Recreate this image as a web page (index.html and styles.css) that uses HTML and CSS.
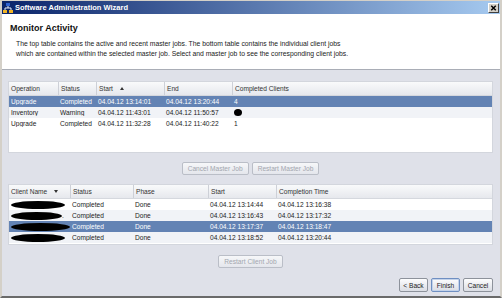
FILE: index.html
```html
<!DOCTYPE html>
<html lang="en">
<head>
  <meta charset="UTF-8" />
  <title>Software Administration Wizard</title>
  <link rel="stylesheet" href="styles.css">
</head>
<body>
  <div class="window">
    <div class="titlebar">
      <svg class="app-icon" viewBox="0 0 10 10">
        <path d="M5 3v2M2 5h6M2 5v2M8 5v2" stroke="#e8eef8" stroke-width="1" fill="none"/>
        <rect x="3" y="0" width="4" height="3" fill="#2f62d0"/>
        <rect x="0" y="7" width="4" height="3" fill="#f2b524"/>
        <rect x="6" y="7" width="4" height="3" fill="#f2b524"/>
      </svg>
      <span class="title">Software Administration Wizard</span>
      <div class="close-btn"><svg viewBox="0 0 8 7"><path d="M2 1.5l4 4M6 1.5l-4 4" stroke="#000" stroke-width="1.3"/></svg></div>
    </div>
    <div class="header">
      <h1>Monitor Activity</h1>
      <p>The top table contains the active and recent master jobs. The bottom table contains the individual client jobs<br>which are contained within the selected master job. Select and master job to see the corresponding client jobs.</p>
    </div>
    <div class="content">
      <div class="table master">
        <div class="row head"><span>Operation</span><span>Status</span><span>Start<i class="sort up"></i></span><span>End</span><span>Completed Clients</span></div>
        <div class="row selected"><span>Upgrade</span><span>Completed</span><span>04.04.12 13:14:01</span><span>04.04.12 13:20:44</span><span>4</span></div>
        <div class="row alt"><span>Inventory</span><span>Warning</span><span>04.04.12 11:43:01</span><span>04.04.12 11:50:57</span><span><b class="redact dot"></b></span></div>
        <div class="row"><span>Upgrade</span><span>Completed</span><span>04.04.12 11:32:28</span><span>04.04.12 11:40:22</span><span>1</span></div>
      </div>
      <div class="actions">
        <button class="btn" disabled>Cancel Master Job</button>
        <button class="btn" disabled>Restart Master Job</button>
      </div>
      <div class="table client">
        <div class="row head"><span>Client Name<i class="sort down"></i></span><span>Status</span><span>Phase</span><span>Start</span><span>Completion Time</span></div>
        <div class="row"><span><b class="redact" style="width:54px"></b></span><span>Completed</span><span>Done</span><span>04.04.12 13:14:44</span><span>04.04.12 13:16:38</span></div>
        <div class="row alt"><span><b class="redact" style="width:51px"></b>.</span><span>Completed</span><span>Done</span><span>04.04.12 13:16:43</span><span>04.04.12 13:17:32</span></div>
        <div class="row selected"><span><b class="redact" style="width:60px"></b></span><span>Completed</span><span>Done</span><span>04.04.12 13:17:37</span><span>04.04.12 13:18:47</span></div>
        <div class="row alt"><span><b class="redact" style="width:54px"></b></span><span>Completed</span><span>Done</span><span>04.04.12 13:18:52</span><span>04.04.12 13:20:44</span></div>
      </div>
      <div class="actions lower">
        <button class="btn" disabled>Restart Client Job</button>
      </div>
      <div class="nav">
        <button class="btn">&lt; Back</button>
        <button class="btn default">Finish</button>
        <button class="btn">Cancel</button>
      </div>
    </div>
  </div>
</body>
</html>
```

FILE: styles.css
```css
body { margin: 0; background: #d4d0c8; font-family: "Liberation Sans", Arial, sans-serif; }
.window { width: 502px; height: 298px; box-sizing: border-box; display: flex; flex-direction: column; background: #dfe1e9; border: solid #d4d0c8; border-width: 1px 2px 2px; border-bottom-color: #6a6a6a; }

.titlebar { height: 13px; flex: none; display: flex; align-items: center; padding: 0 1px 0 1px; background: linear-gradient(to right, #0a246a, #a6caf0); }
.app-icon { width: 10px; height: 10px; margin-right: 2px; }
.title { flex: 1; color: #fff; font-weight: bold; font-size: 7.5px; white-space: nowrap; }
.close-btn { width: 9px; height: 8px; background: #d4d0c8; border: 1px solid; border-color: #fff #404040 #404040 #fff; display: flex; }
.close-btn svg { width: 100%; height: 100%; }

.header { height: 56px; flex: none; box-sizing: border-box; background: #fff; border-bottom: 1px solid #a9adb6; }
.header h1 { margin: 0; padding: 8px 0 0 8px; font-size: 9px; line-height: 12px; font-weight: bold; color: #111; }
.header p { margin: 5px 0 0 14px; font-size: 6.8px; line-height: 10px; color: #222; }

.content { flex: 1; display: flex; flex-direction: column; padding: 11px 7px 0 6px; }

.table { background: #fff; border: 1px solid #d3d6dd; box-sizing: border-box; overflow: hidden; }
.table.master { height: 72px; }
.table.client { height: 61px; }
.row { display: grid; height: 11px; align-items: center; font-size: 6.6px; color: #222; }
.master .row { grid-template-columns: 49px 38px 68px 68px 1fr; }
.client .row { grid-template-columns: 61px 63px 75px 68px 1fr; }
.row span { padding-left: 2px; white-space: nowrap; overflow: hidden; display: flex; align-items: center; }
.row.head { height: 13px; align-items: stretch; color: #333; background: linear-gradient(#f9fafb, #e6e8ed); border-bottom: 1px solid #d5d8de; }
.row.head span + span { border-left: 1px solid #cdd0d7; }
.row.alt { background: #f1f3f7; }
.row.selected { background: #6383b4; color: #fff; }

.sort { display: inline-block; width: 0; height: 0; border-left: 2.5px solid transparent; border-right: 2.5px solid transparent; }
.sort.up { border-bottom: 3px solid #333; margin-left: 7px; }
.sort.down { border-top: 3px solid #333; margin-left: 7px; }

.redact { display: inline-block; height: 8px; background: #000; border-radius: 50%; }
.redact.dot { width: 8px; height: 7px; }

.actions { display: flex; justify-content: center; gap: 3px; margin: 9px 0; }
.actions.lower { margin: 10px 0 0; }
.btn { height: 13px; padding: 0 5px; font: 6.6px "Liberation Sans", Arial, sans-serif; color: #a2a6ae; background: linear-gradient(#f6f7f9, #e4e6ec); border: 1px solid #babec7; border-radius: 2px; }

.nav { margin-top: auto; margin-bottom: 4px; display: flex; justify-content: flex-end; gap: 3px; }
.nav .btn { height: 14px; width: 29px; padding: 0; color: #222; border-color: #8d929b; background: linear-gradient(#fdfdfe, #dadde4); }
.nav .btn:last-child { width: 30px; }
.nav .default { border-color: #6f8fc2; box-shadow: inset 0 0 0 1px #c4d3ea; }
```
